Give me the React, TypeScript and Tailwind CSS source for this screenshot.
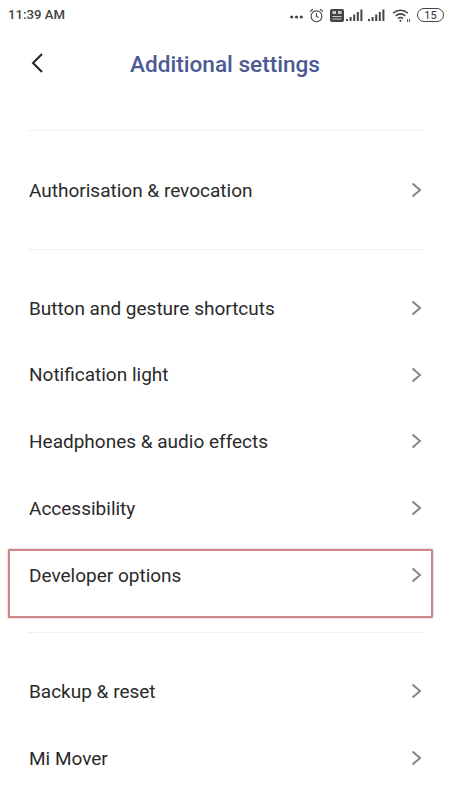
import React from "react";

function Chevron() {
  return (
    <svg width="11" height="16" viewBox="0 0 11 16" fill="none" stroke="#858585" strokeWidth="2" className="mb-[2px] shrink-0">
      <path d="M1.5 1.5l7.5 6.5-7.5 6.5" />
    </svg>
  );
}

function Row({ label, marked }: { label: string; marked?: boolean }) {
  return (
    <div className="relative flex h-[66.7px] items-center justify-between pl-[29px] pr-[28px]">
      <span className="text-[19px] text-[#2a2a2a]">{label}</span>
      <Chevron />
      {marked && (
        <div className="absolute left-[8px] top-[7px] h-[69px] w-[425px] rounded-[1px] border-2 border-[#d08688] shadow-[0_0_2px_#b8a0a0]" />
      )}
    </div>
  );
}

function Signal() {
  return (
    <svg width="17" height="13" viewBox="0 0 17 13" fill="#444">
      <rect x="0" y="10" width="2" height="2" />
      <rect x="3.6" y="8" width="2" height="4" />
      <rect x="7.2" y="5.5" width="2" height="6.5" />
      <rect x="10.8" y="3" width="2" height="9" />
      <rect x="14.4" y="0.5" width="2" height="11.5" />
    </svg>
  );
}

function Divider() {
  return <div className="mx-[28px] h-px bg-[#f0f0f0]" />;
}

export default function App() {
  return (
    <div className="h-[800px] w-[450px] overflow-hidden bg-white font-['Roboto',sans-serif]">
      <div className="flex h-[30px] items-center justify-between pl-[8px] pr-[6px]">
        <span className="text-[13.2px] font-medium text-[#444]">11:39 AM</span>
        <div className="flex items-center">
          <svg width="13" height="4" viewBox="0 0 13 4" fill="#444" className="mr-[6px] mt-[4px]">
            <circle cx="1.7" cy="2" r="1.6" />
            <circle cx="6.5" cy="2" r="1.6" />
            <circle cx="11.3" cy="2" r="1.6" />
          </svg>
          <svg width="15" height="15" viewBox="0 0 15 15" fill="none" stroke="#444" strokeWidth="1.1" className="mr-[6px]">
            <circle cx="7.5" cy="8.3" r="5.4" />
            <path d="M7.5 5v3.5l2 1M1.2 3.5L4 1.2M13.8 3.5L11 1.2" />
          </svg>
          <svg width="14" height="13" viewBox="0 0 14 13" className="mr-[2px]">
            <rect x="0" y="0" width="14" height="13" rx="2" fill="#444" />
            <rect x="2.5" y="2" width="3.5" height="3" fill="#ccc" />
            <rect x="8" y="2" width="3.5" height="3" fill="#ccc" />
            <path d="M2.5 7.5h9M2.5 10h9" stroke="#ccc" strokeWidth="1" />
          </svg>
          <div className="mr-[5px]">
            <Signal />
          </div>
          <div className="mr-[7px]">
            <Signal />
          </div>
          <svg width="19" height="15" viewBox="0 0 19 15" fill="none" stroke="#444" strokeWidth="1.5" className="mr-[6px]">
            <path d="M1 5.2c4.5-4 10.5-4 15 0M3.6 8c3-2.6 6.8-2.6 9.8 0M6 10.6c1.6-1.3 3.4-1.3 5 0" />
            <circle cx="8.5" cy="12.8" r="1.1" fill="#444" stroke="none" />
            <path d="M15.5 11v3M17.5 11v3" strokeWidth="0.9" />
          </svg>
          <div className="flex h-[14px] w-[27px] items-center justify-center rounded-[7px] border border-[#444] text-[11px] leading-none text-[#333]">
            15
          </div>
        </div>
      </div>

      <div className="flex h-[68px] items-center pl-[30px]">
        <svg width="14" height="22" viewBox="0 0 14 22" fill="none" stroke="#222" strokeWidth="2" className="mb-[2px]">
          <path d="M12 2L3 11l9 9" />
        </svg>
        <h1 className="ml-[86px] mt-[2px] text-[22.6px] font-medium text-[#4a5a94]">Additional settings</h1>
      </div>

      <div className="pt-[32px]">
        <Divider />
        <div className="pb-[24px] pt-[27px]">
          <Row label="Authorisation & revocation" />
        </div>
        <Divider />
        <div className="pb-[23px] pt-[26px]">
          <Row label="Button and gesture shortcuts" />
          <Row label="Notification light" />
          <Row label="Headphones & audio effects" />
          <Row label="Accessibility" />
          <Row label="Developer options" marked />
        </div>
        <Divider />
        <div className="pt-[26px]">
          <Row label="Backup & reset" />
          <Row label="Mi Mover" />
        </div>
      </div>
    </div>
  );
}
